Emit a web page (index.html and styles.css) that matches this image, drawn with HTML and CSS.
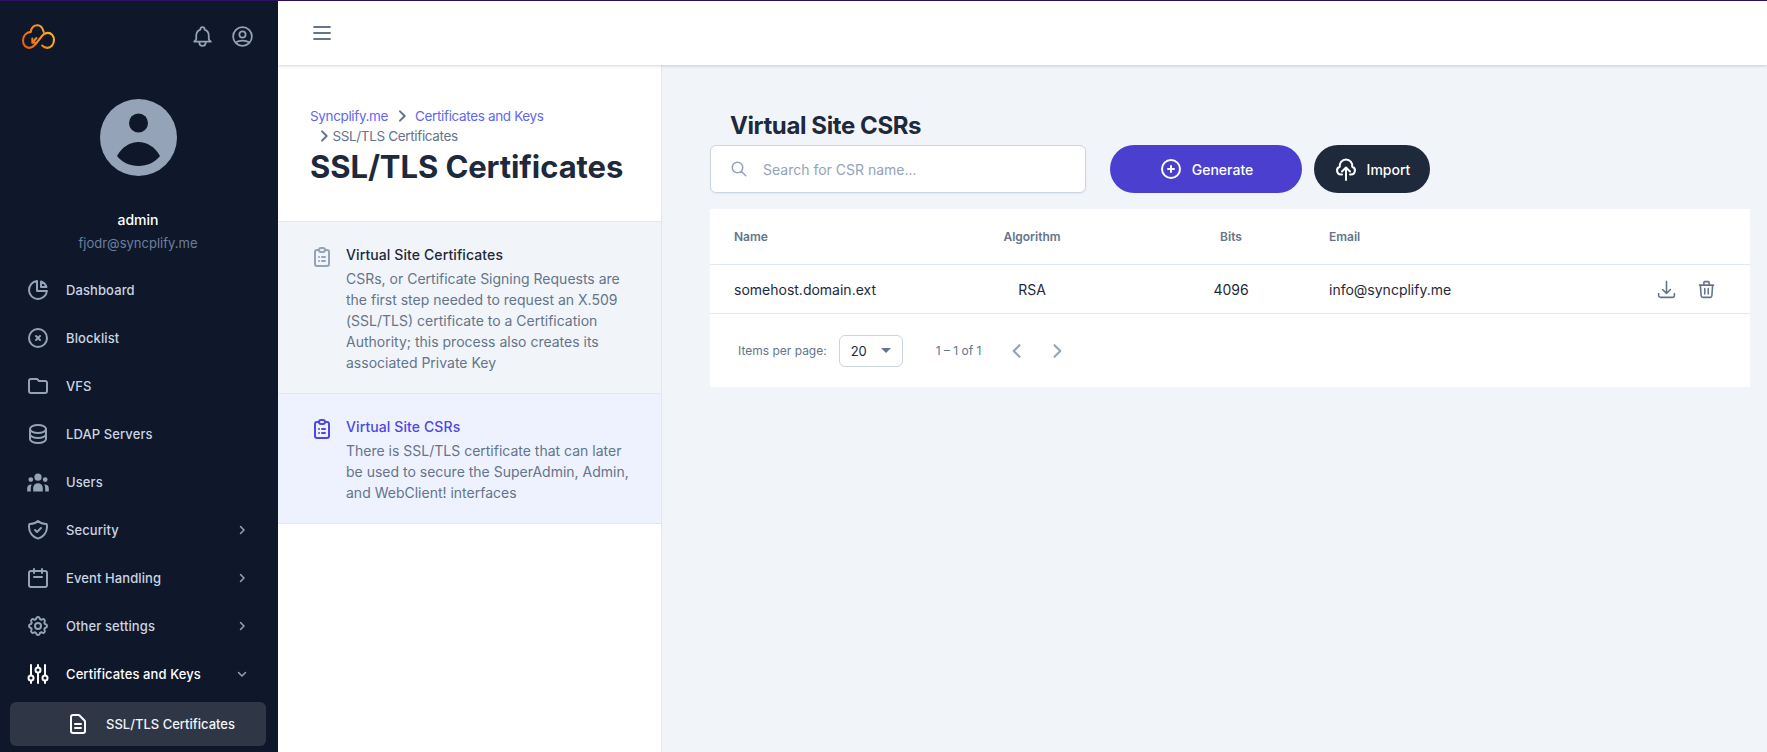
FILE: index.html
```html
<!DOCTYPE html>
<html>
<head>
<meta charset="utf-8">
<title>SSL/TLS Certificates</title>
<link rel="stylesheet" href="styles.css">
</head>
<body>
<div class="app">
  <aside class="sidebar">
    <div class="side-top">
      <svg class="logo" viewBox="0 0 32 24" fill="none" stroke="url(#logograd)" stroke-width="2" stroke-linecap="round" stroke-linejoin="round">
        <defs>
          <linearGradient id="logograd" gradientUnits="userSpaceOnUse" x1="0" y1="22" x2="32" y2="4">
            <stop offset="0" stop-color="#ea580c"/>
            <stop offset="1" stop-color="#fbbf24"/>
          </linearGradient>
        </defs>
        <path d="M21 7.500C20 3.500 18 1 15 1 11.500 1 9 3.500 8.500 7.500 4 8 1 11.500 1 16c0 4 2.500 7 6 7 2.500 0 4.500-1.500 6-3.500l6-7.500c1.500-2 3.500-3.500 6-3.500 3.500 0 6 3 6 7 0 4.500-3 7.500-6.500 7.500-2 0-3.500-.7-5-2.200"/>
        <path d="M10 18l4-4.500M10 14v4h4"/>
      </svg>
      <div class="side-top-icons">
        <svg class="icon25" viewBox="0 0 24 24" fill="none" stroke="#94a3b8" stroke-width="1.700" stroke-linecap="round" stroke-linejoin="round"><path d="M15 17h5l-1.405-1.405A2.032 2.032 0 0118 14.158V11a6.002 6.002 0 00-4-5.659V5a2 2 0 10-4 0v.341C7.670 6.165 6 8.388 6 11v3.159c0 .538-.214 1.055-.595 1.436L4 17h5m6 0v1a3 3 0 11-6 0v-1m6 0H9"/></svg>
        <svg class="icon25" viewBox="0 0 24 24" fill="none" stroke="#94a3b8" stroke-width="1.700" stroke-linecap="round" stroke-linejoin="round"><path d="M5.121 17.804A13.937 13.937 0 0112 16c2.500 0 4.847.655 6.879 1.804M15 10a3 3 0 11-6 0 3 3 0 016 0zm6 2a9 9 0 11-18 0 9 9 0 0118 0z"/></svg>
      </div>
    </div>

    <div class="profile">
      <svg class="avatar" viewBox="0 0 77 77">
        <circle cx="38.500" cy="38.500" r="38.500" fill="#94a3b8"/>
        <circle cx="38.500" cy="24" r="9.500" fill="#0f172a"/>
        <path d="M17 57C22 48 30 43 38.500 43S55 48 60 57C55 63.500 47 67 38.500 67S22 63.500 17 57z" fill="#0f172a"/>
      </svg>
      <div class="profile-name">admin</div>
      <div class="profile-mail">fjodr@syncplify.me</div>
    </div>

    <nav class="nav">
      <a class="nav-row">
        <svg class="nav-icon" viewBox="0 0 24 24"><path d="M11 3.055A9.001 9.001 0 1020.945 13H11V3.055z"/><path d="M20.488 9H15V3.512A9.025 9.025 0 0120.488 9z"/></svg>
        <span>Dashboard</span>
      </a>
      <a class="nav-row">
        <svg class="nav-icon" viewBox="0 0 24 24"><path d="M10 14l2-2m0 0l2-2m-2 2l-2-2m2 2l2 2m7-2a9 9 0 11-18 0 9 9 0 0118 0z"/></svg>
        <span>Blocklist</span>
      </a>
      <a class="nav-row">
        <svg class="nav-icon" viewBox="0 0 24 24"><path d="M3 7v10a2 2 0 002 2h14a2 2 0 002-2V9a2 2 0 00-2-2h-6l-2-2H5a2 2 0 00-2 2z"/></svg>
        <span>VFS</span>
      </a>
      <a class="nav-row">
        <svg class="nav-icon" viewBox="0 0 24 24"><path d="M4 7v10c0 2.210 3.582 4 8 4s8-1.790 8-4V7M4 7c0 2.210 3.582 4 8 4s8-1.790 8-4M4 7c0-2.210 3.582-4 8-4s8 1.790 8 4m0 5c0 2.210-3.582 4-8 4s-8-1.790-8-4"/></svg>
        <span>LDAP Servers</span>
      </a>
      <a class="nav-row">
        <svg class="nav-icon nav-icon-solid" viewBox="0 0 20 20"><path d="M13 6a3 3 0 11-6 0 3 3 0 016 0zM18 8a2 2 0 11-4 0 2 2 0 014 0zM14 15a4 4 0 00-8 0v3h8v-3zM6 8a2 2 0 11-4 0 2 2 0 014 0zM16 18v-3a5.972 5.972 0 00-.75-2.906A3.005 3.005 0 0119 15v3h-3zM4.750 12.094A5.973 5.973 0 004 15v3H1v-3a3 3 0 013.750-2.906z"/></svg>
        <span>Users</span>
      </a>
      <a class="nav-row">
        <svg class="nav-icon" viewBox="0 0 24 24"><path d="M9 12l2 2 4-4m5.618-4.016A11.955 11.955 0 0112 2.944a11.955 11.955 0 01-8.618 3.040A12.020 12.020 0 003 9c0 5.591 3.824 10.290 9 11.622 5.176-1.332 9-6.030 9-11.622 0-1.042-.133-2.052-.382-3.016z"/></svg>
        <span>Security</span>
        <svg class="nav-caret" viewBox="0 0 24 24"><path d="M9 5l7 7-7 7"/></svg>
      </a>
      <a class="nav-row">
        <svg class="nav-icon" viewBox="0 0 24 24"><path d="M8 3v4m8-4v4M5 5h14a2 2 0 012 2v12a2 2 0 01-2 2H5a2 2 0 01-2-2V7a2 2 0 012-2zM8 11h8"/></svg>
        <span>Event Handling</span>
        <svg class="nav-caret" viewBox="0 0 24 24"><path d="M9 5l7 7-7 7"/></svg>
      </a>
      <a class="nav-row">
        <svg class="nav-icon" viewBox="0 0 24 24"><path d="M10.325 4.317c.426-1.756 2.924-1.756 3.350 0a1.724 1.724 0 002.573 1.066c1.543-.940 3.310.826 2.370 2.370a1.724 1.724 0 001.065 2.572c1.756.426 1.756 2.924 0 3.350a1.724 1.724 0 00-1.066 2.573c.940 1.543-.826 3.310-2.370 2.370a1.724 1.724 0 00-2.572 1.065c-.426 1.756-2.924 1.756-3.350 0a1.724 1.724 0 00-2.573-1.066c-1.543.940-3.310-.826-2.370-2.370a1.724 1.724 0 00-1.065-2.572c-1.756-.426-1.756-2.924 0-3.350a1.724 1.724 0 001.066-2.573c-.940-1.543.826-3.310 2.370-2.370.996.608 2.296.070 2.572-1.065z"/><path d="M15 12a3 3 0 11-6 0 3 3 0 016 0z"/></svg>
        <span>Other settings</span>
        <svg class="nav-caret" viewBox="0 0 24 24"><path d="M9 5l7 7-7 7"/></svg>
      </a>
      <a class="nav-row nav-row-open">
        <svg class="nav-icon" viewBox="0 0 24 24"><path d="M5 3v10m0 6v2M12 3v2m0 6v10M19 3v10m0 6v2"/><circle cx="5" cy="16" r="2.500"/><circle cx="12" cy="8" r="2.500"/><circle cx="19" cy="16" r="2.500"/></svg>
        <span>Certificates and Keys</span>
        <svg class="nav-caret" viewBox="0 0 24 24"><path d="M5 9l7 7 7-7"/></svg>
      </a>
      <a class="nav-sub">
        <svg class="nav-icon" viewBox="0 0 24 24"><path d="M9 12h6m-6 4h6m2 5H7a2 2 0 01-2-2V5a2 2 0 012-2h5.586a1 1 0 01.707.293l5.414 5.414a1 1 0 01.293.707V19a2 2 0 01-2 2z"/></svg>
        <span>SSL/TLS Certificates</span>
      </a>
    </nav>
  </aside>

  <div class="main">
    <header class="topbar">
      <svg class="menu-btn" viewBox="0 0 24 24"><path d="M4 6h16M4 12h16M4 18h16"/></svg>
    </header>

    <div class="work">
      <section class="panel">
        <div class="panel-head">
          <div class="crumbs">
            <a>Syncplify.me</a>
            <svg class="crumb-sep" viewBox="0 0 24 24"><path d="M9 5l7 7-7 7"/></svg>
            <a>Certificates and Keys</a>
            <span class="crumb-last">
              <svg class="crumb-sep" viewBox="0 0 24 24"><path d="M9 5l7 7-7 7"/></svg>
              <span>SSL/TLS Certificates</span>
            </span>
          </div>
          <h1>SSL/TLS Certificates</h1>
        </div>

        <div class="panel-item">
          <svg class="item-icon" viewBox="0 0 24 24"><path d="M9 5H7a2 2 0 00-2 2v12a2 2 0 002 2h10a2 2 0 002-2V7a2 2 0 00-2-2h-2M9 5a2 2 0 002 2h2a2 2 0 002-2M9 5a2 2 0 012-2h2a2 2 0 012 2m-3 7h3m-3 4h3m-6-4h.010M9 16h.010"/></svg>
          <div>
            <div class="item-title">Virtual Site Certificates</div>
            <p>CSRs, or Certificate Signing Requests are the first step needed to request an X.509 (SSL/TLS) certificate to a Certification Authority; this process also creates its associated Private Key</p>
          </div>
        </div>
        <div class="panel-item panel-item-on">
          <svg class="item-icon" viewBox="0 0 24 24"><path d="M9 5H7a2 2 0 00-2 2v12a2 2 0 002 2h10a2 2 0 002-2V7a2 2 0 00-2-2h-2M9 5a2 2 0 002 2h2a2 2 0 002-2M9 5a2 2 0 012-2h2a2 2 0 012 2m-3 7h3m-3 4h3m-6-4h.010M9 16h.010"/></svg>
          <div>
            <div class="item-title">Virtual Site CSRs</div>
            <p>There is SSL/TLS certificate that can later be used to secure the SuperAdmin, Admin, and WebClient! interfaces</p>
          </div>
        </div>
      </section>

      <section class="content">
        <h2>Virtual Site CSRs</h2>
        <div class="toolbar">
          <div class="search">
            <svg viewBox="0 0 24 24"><path d="M21 21l-6-6m2-5a7 7 0 11-14 0 7 7 0 0114 0z"/></svg>
            <span>Search for CSR name...</span>
          </div>
          <button class="btn btn-generate">
            <svg viewBox="0 0 24 24"><path d="M12 9v3m0 0v3m0-3h3m-3 0H9m12 0a9 9 0 11-18 0 9 9 0 0118 0z"/></svg>
            Generate
          </button>
          <button class="btn btn-import">
            <svg viewBox="0 0 24 24"><path d="M8 17.500H7a4 4 0 01-1.200-7.800A6.300 6.300 0 0112 2.500a6.300 6.300 0 016.200 7.200A4 4 0 0117 17.500h-1M12 23V10.500M8 14.500l4-4 4 4"/></svg>
            Import
          </button>
        </div>

        <div class="tbl">
          <div class="tbl-row tbl-head">
            <div>Name</div>
            <div class="col-algo">Algorithm</div>
            <div class="col-bits">Bits</div>
            <div>Email</div>
            <div></div>
          </div>
          <div class="tbl-row tbl-body">
            <div>somehost.domain.ext</div>
            <div class="col-algo">RSA</div>
            <div class="col-bits">4096</div>
            <div>info@syncplify.me</div>
            <div class="row-actions">
              <svg viewBox="0 0 24 24"><path d="M3 16.500v2.250A2.250 2.250 0 005.250 21h13.500A2.250 2.250 0 0021 18.750V16.500M16.500 12L12 16.500m0 0L7.500 12m4.500 4.500V3"/></svg>
              <svg viewBox="0 0 24 24"><path d="M19 7l-.867 12.142A2 2 0 0116.138 21H7.862a2 2 0 01-1.995-1.858L5 7m5 4v6m4-6v6m1-10V4a1 1 0 00-1-1h-4a1 1 0 00-1 1v3M4 7h16"/></svg>
            </div>
          </div>
          <div class="pager">
            <span class="pager-label">Items per page:</span>
            <div class="pager-select">
              <span>20</span>
              <i class="pager-arrow"></i>
            </div>
            <span class="pager-range">1 – 1 of 1</span>
            <svg class="pager-nav" viewBox="0 0 24 24"><path d="M15 19l-7-7 7-7"/></svg>
            <svg class="pager-nav" viewBox="0 0 24 24"><path d="M9 5l7 7-7 7"/></svg>
          </div>
        </div>
      </section>
    </div>
  </div>
</div>
</body>
</html>
```

FILE: styles.css
```css
* { box-sizing: border-box; }
html, body { height: 100%; }
body {
  margin: 0;
  overflow: hidden;
  font-family: Inter, "Noto Sans", sans-serif;
  font-size: 14px;
  color: #1e293b;
  background: #f1f5f9;
}
.app {
  display: grid;
  grid-template-columns: 278px 1fr;
  height: 100vh;
  border-top: 1px solid #2e1065;
}

/* sidebar */
.sidebar {
  background: #0f172a;
  color: #cbd5e1;
  overflow: hidden;
}
.side-top {
  display: flex;
  justify-content: space-between;
  align-items: center;
  height: 72px;
  padding: 0 23px 2px 22px;
}
.logo { width: 33px; height: 25px; }
.side-top-icons { display: flex; gap: 15px; }
.icon25 { width: 25px; height: 25px; }
.profile {
  display: flex;
  flex-direction: column;
  align-items: center;
  padding: 26px 2px 0 0;
}
.avatar { width: 77px; height: 77px; }
.profile-name {
  margin-top: 34px;
  color: #fff;
  font-size: 14px;
  font-weight: 500;
  line-height: 20px;
}
.profile-mail {
  margin-top: 3px;
  color: #6b7f9e;
  font-size: 13px;
  line-height: 20px;
}
.nav { margin-top: 13px; }
.nav-row {
  display: flex;
  align-items: center;
  height: 48px;
  padding: 0 30px 0 26px;
  font-size: 13px;
  font-weight: 500;
  letter-spacing: .1px;
  color: #cbd5e1;
}
.nav-icon {
  flex: none;
  width: 24px;
  height: 24px;
  margin-right: 16px;
  fill: none;
  stroke: #94a3b8;
  stroke-width: 2;
  stroke-linecap: round;
  stroke-linejoin: round;
}
.nav-icon-solid { fill: #94a3b8; stroke: none; }
.nav-row span { flex: 1; }
.nav-caret {
  width: 12px;
  height: 12px;
  fill: none;
  stroke: #94a3b8;
  stroke-width: 3;
  stroke-linecap: round;
  stroke-linejoin: round;
}
.nav-row-open { color: #fff; }
.nav-row-open .nav-icon { stroke: #fff; }
.nav-sub {
  display: flex;
  align-items: center;
  height: 44px;
  margin: 4px 12px 0 10px;
  padding-left: 56px;
  border-radius: 6px;
  background: #2f3645;
  color: #f1f5f9;
  font-size: 13px;
  font-weight: 500;
}
.nav-sub .nav-icon { stroke: #fff; }

/* header */
.main { display: flex; flex-direction: column; min-width: 0; }
.topbar {
  display: flex;
  align-items: center;
  flex: none;
  height: 64px;
  padding-left: 32px;
  background: #fff;
  box-shadow: 0 1px 3px rgba(15, 23, 42, .18);
  position: relative;
}
.menu-btn {
  width: 24px;
  height: 24px;
  fill: none;
  stroke: #64748b;
  stroke-width: 1.800;
  stroke-linecap: round;
}
.work { display: flex; flex: 1; min-height: 0; }

/* left panel */
.panel {
  flex: none;
  width: 384px;
  background: #fff;
  border-right: 1px solid #e2e8f0;
}
.panel-head {
  height: 157px;
  padding: 41px 32px 0;
  border-bottom: 1px solid #e2e8f0;
}
.crumbs {
  font-size: 13.500px;
  line-height: 20px;
  color: #64748b;
  letter-spacing: -.35px;
}
.crumbs a { color: #6366f1; }
.crumb-sep {
  width: 16px;
  height: 16px;
  margin: 0 2px;
  vertical-align: -3px;
  fill: none;
  stroke: #64748b;
  stroke-width: 3;
  stroke-linecap: round;
  stroke-linejoin: round;
}
.crumb-last { display: inline-block; white-space: nowrap; }
.crumb-last .crumb-sep { margin: 0 -3px 0 6px; }
h1 {
  margin: 2px 0 0;
  font-size: 31px;
  font-weight: 700;
  line-height: 38px;
  letter-spacing: -.08px;
  color: #1e293b;
}
.panel-item {
  display: flex;
  gap: 12px;
  padding: 23px 24px 20px 32px;
  background: #f1f5f9;
  border-bottom: 1px solid #e2e8f0;
}
.panel-item-on { background: #eef2ff; }
.item-icon {
  flex: none;
  width: 24px;
  height: 24px;
  fill: none;
  stroke: #94a3b8;
  stroke-width: 2;
  stroke-linecap: round;
  stroke-linejoin: round;
}
.panel-item-on .item-icon { stroke: #4f46e5; }
.item-title {
  font-size: 14px;
  font-weight: 500;
  line-height: 20px;
  letter-spacing: .1px;
  color: #1e293b;
}
.panel-item-on .item-title { color: #4f46e5; }
.panel-item p {
  margin: 3px 0 0;
  font-size: 14px;
  line-height: 21px;
  color: #64748b;
}

/* content */
.content { flex: 1; min-width: 0; padding: 0 17px 0 48px; }
h2 {
  margin: 46px 0 0 20px;
  font-size: 24px;
  font-weight: 700;
  line-height: 30px;
  letter-spacing: -.4px;
  color: #1e293b;
}
.toolbar { display: flex; align-items: center; gap: 12px; margin-top: 4px; }
.search {
  display: flex;
  align-items: center;
  width: 376px;
  height: 48px;
  margin-right: 12px;
  padding-left: 19px;
  background: #fff;
  border: 1px solid #cbd5e1;
  border-radius: 6px;
  box-shadow: 0 1px 2px rgba(15, 23, 42, .05);
  color: #94a3b8;
}
.search svg {
  width: 18px;
  height: 18px;
  margin-right: 15px;
  fill: none;
  stroke: #94a3b8;
  stroke-width: 2;
  stroke-linecap: round;
  stroke-linejoin: round;
}
.btn {
  display: flex;
  align-items: center;
  justify-content: center;
  gap: 9px;
  height: 48px;
  border: 0;
  border-radius: 24px;
  color: #fff;
  font-family: inherit;
  font-size: 14px;
  font-weight: 500;
}
.btn svg {
  width: 24px;
  height: 24px;
  fill: none;
  stroke: #fff;
  stroke-width: 2;
  stroke-linecap: round;
  stroke-linejoin: round;
}
.btn-generate { width: 192px; background: #4a3fcf; }
.btn-import { width: 116px; background: #1e293b; }
.tbl { margin-top: 16px; background: #fff; }
.tbl-row {
  display: grid;
  grid-template-columns: 228px 140px 227px 1fr auto;
  align-items: center;
  padding: 0 33px 0 24px;
  border-bottom: 1px solid #e2e8f0;
}
.tbl-head {
  height: 56px;
  font-size: 12px;
  font-weight: 600;
  color: #64748b;
}
.tbl-body { height: 49px; font-size: 14px; color: #1e293b; }
.col-algo { text-align: center; }
.col-bits { text-align: center; margin-left: 31px; }
.row-actions { display: flex; gap: 19px; }
.row-actions svg {
  width: 21px;
  height: 21px;
  fill: none;
  stroke: #64748b;
  stroke-width: 1.800;
  stroke-linecap: round;
  stroke-linejoin: round;
}
.pager {
  display: flex;
  align-items: center;
  height: 73px;
  padding-left: 28px;
  font-size: 12px;
  color: #64748b;
}
.pager-select {
  display: flex;
  align-items: center;
  justify-content: space-between;
  width: 64px;
  height: 32px;
  margin-left: 12px;
  padding: 0 11px;
  border: 1px solid #cbd5e1;
  border-radius: 6px;
  color: #1e293b;
  font-size: 13px;
}
.pager-arrow {
  width: 0;
  height: 0;
  border-left: 5px solid transparent;
  border-right: 5px solid transparent;
  border-top: 5px solid #64748b;
}
.pager-range { margin: 0 26px 0 33px; }
.pager-nav {
  width: 20px;
  height: 20px;
  margin-right: 20px;
  fill: none;
  stroke: #94a3b8;
  stroke-width: 2.500;
  stroke-linecap: round;
  stroke-linejoin: round;
}
```
